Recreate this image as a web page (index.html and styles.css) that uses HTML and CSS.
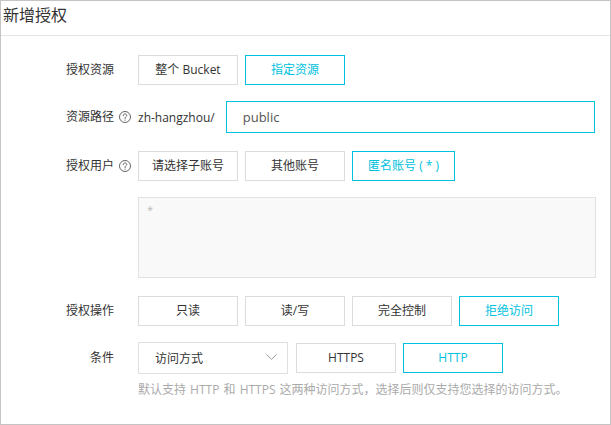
FILE: index.html
```html
<!DOCTYPE html>
<html lang="zh-CN">
<head>
<meta charset="utf-8">
<title>新增授权</title>
<link rel="stylesheet" href="styles.css">
</head>
<body>
<div class="panel">
  <div class="header">新增授权</div>
  <div class="form">
    <div class="row row-first">
      <div class="label">授权资源</div>
      <div class="controls">
        <button class="btn">整个 Bucket</button>
        <button class="btn active">指定资源</button>
      </div>
    </div>
    <div class="row">
      <div class="label">资源路径<svg class="help" viewBox="0 0 12 12" width="12" height="12"><circle cx="6" cy="6" r="5.5" fill="none" stroke="#666" stroke-width="1"/><path d="M4.2 4.7 C4.2 3.5 5.1 2.9 6 2.9 C7 2.9 7.8 3.6 7.8 4.5 C7.8 5.6 6.3 5.8 6.1 6.7 L6.1 7.5" fill="none" stroke="#666" stroke-width="1" stroke-linecap="round"/><circle cx="6.1" cy="9.1" r="0.6" fill="#666"/></svg></div>
      <div class="controls">
        <span class="prefix">zh-hangzhou/</span>
        <div class="input">public</div>
      </div>
    </div>
    <div class="row row-user">
      <div class="label">授权用户<svg class="help" viewBox="0 0 12 12" width="12" height="12"><circle cx="6" cy="6" r="5.5" fill="none" stroke="#666" stroke-width="1"/><path d="M4.2 4.7 C4.2 3.5 5.1 2.9 6 2.9 C7 2.9 7.8 3.6 7.8 4.5 C7.8 5.6 6.3 5.8 6.1 6.7 L6.1 7.5" fill="none" stroke="#666" stroke-width="1" stroke-linecap="round"/><circle cx="6.1" cy="9.1" r="0.6" fill="#666"/></svg></div>
      <div class="controls">
        <button class="btn">请选择子账号</button>
        <button class="btn">其他账号</button>
        <button class="btn btn-anon active">匿名账号 ( * )</button>
      </div>
    </div>
    <div class="row row-area">
      <div class="label"></div>
      <div class="textarea">*</div>
    </div>
    <div class="row row-ops">
      <div class="label">授权操作</div>
      <div class="controls">
        <button class="btn">只读</button>
        <button class="btn">读/写</button>
        <button class="btn">完全控制</button>
        <button class="btn active">拒绝访问</button>
      </div>
    </div>
    <div class="row">
      <div class="label">条件</div>
      <div class="controls">
        <div class="select">
          <span>访问方式</span>
          <svg class="chevron" viewBox="0 0 11 6" width="11" height="6"><path d="M0.5 0.5 L5.5 5.3 L10.5 0.5" fill="none" stroke="#999" stroke-width="1"/></svg>
        </div>
        <button class="btn btn-wide-gap">HTTPS</button>
        <button class="btn active">HTTP</button>
      </div>
    </div>
    <div class="hint">默认支持 HTTP 和 HTTPS 这两种访问方式，选择后则仅支持您选择的访问方式。</div>
  </div>
</div>
</body>
</html>
```
FILE: styles.css
```css
* {
  box-sizing: border-box;
}

html, body {
  margin: 0;
  padding: 0;
  background: #fff;
}

body {
  font-family: "Open Sans", "Noto Sans CJK SC", sans-serif;
  font-size: 12px;
  color: #333;
}

.panel {
  width: 611px;
  height: 425px;
  border: 1px solid #c4c4c4;
  background: #fff;
}

.header {
  height: 35px;
  border-bottom: 1px solid #e5e5e5;
  padding-left: 2px;
  font-size: 16px;
  line-height: 28px;
  color: #333;
}

.form {
  display: flex;
  flex-direction: column;
  padding-top: 18px;
}

.row {
  display: flex;
  align-items: center;
  min-height: 32px;
  margin-top: 15px;
}

.row-first {
  margin-top: 0;
}

.row-user,
.row-ops {
  margin-top: 17px;
}

.row-area {
  margin-top: 15px;
}

.label {
  position: relative;
  width: 113px;
  flex: none;
  margin-right: 24px;
  text-align: right;
  line-height: 18px;
  color: #333;
}

.help {
  position: absolute;
  right: -17px;
  top: 3px;
}

.controls {
  display: flex;
  align-items: center;
  gap: 7px;
}

.btn {
  font: inherit;
  font-size: 12px;
  min-width: 100px;
  height: 30px;
  padding: 0 13px;
  margin: 0;
  border: 1px solid #dcdcdc;
  background: #fff;
  color: #333;
  line-height: 28px;
  text-align: center;
  cursor: pointer;
}

.btn.active {
  border-color: #00c1de;
  color: #00c1de;
}

.btn-anon {
  padding: 0 15px;
}

.btn-wide-gap {
  margin-left: 1px;
}

.prefix {
  color: #333;
  margin-right: 4px;
}

.input {
  width: 369px;
  height: 32px;
  border: 1px solid #00c1de;
  padding-left: 16px;
  line-height: 30px;
  font-size: 13px;
  color: #555;
}

.textarea {
  width: 458px;
  height: 81px;
  border: 1px solid #e2e2e2;
  background: #f9f9f9;
  padding: 4px 8px;
  color: #bbb;
  font-size: 11px;
  line-height: 16px;
}

.select {
  width: 150px;
  height: 32px;
  border: 1px solid #e0e0e0;
  display: flex;
  align-items: center;
  justify-content: space-between;
  padding: 0 10px 0 16px;
  color: #333;
}

.chevron {
  display: block;
  margin-top: -2px;
}

.hint {
  margin-top: 7px;
  margin-left: 137px;
  line-height: 18px;
  color: #aaa;
  font-size: 12px;
  word-spacing: 1px;
}
```
